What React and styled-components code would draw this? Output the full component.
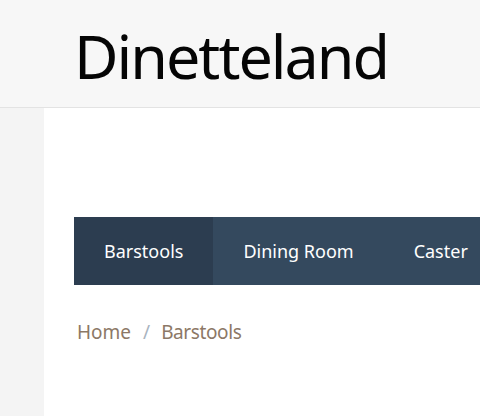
import React from "react";
import styled, { createGlobalStyle } from "styled-components";

const Global = createGlobalStyle`
  html, body { margin: 0; padding: 0; background: #ffffff; }
  body { font-family: "Noto Sans", "DejaVu Sans", sans-serif; }
  * { box-sizing: border-box; }
`;

const Page = styled.div`
  width: 480px;
  height: 416px;
  overflow: hidden;
  display: flex;
  flex-direction: column;
`;

const Header = styled.header`
  height: 108px;
  background: #f7f7f7;
  border-bottom: 1px solid #e3e3e3;
  padding: 0 0 0 74px;
  display: flex;
  align-items: center;
  flex-shrink: 0;
`;

const Logo = styled.h1`
  margin: 0;
  font-family: "Noto Sans", sans-serif;
  font-weight: 400;
  font-size: 61px;
  line-height: 1;
  color: #050505;
  white-space: nowrap;
  letter-spacing: -2px;
  transform: translateY(2px);
`;

const Body = styled.div`
  flex: 1;
  display: flex;
`;

const Side = styled.aside`
  width: 44px;
  background: #f4f4f4;
  flex-shrink: 0;
`;

const Main = styled.main`
  flex: 1;
  background: #ffffff;
  padding: 109px 0 0 30px;
  min-width: 0;
`;

const Nav = styled.nav`
  display: flex;
  height: 68px;
  background: #34495e;
  width: max-content;
  min-width: 500px;
`;

const NavItem = styled.a`
  display: flex;
  align-items: center;
  padding: 0 30px;
  height: 100%;
  color: #ffffff;
  font-size: 18px;
  white-space: nowrap;
  text-decoration: none;
  background: ${(p) => (p.$active ? "#2c3d50" : "transparent")};
`;

const Crumbs = styled.div`
  display: flex;
  align-items: center;
  margin-top: 34px;
  padding-left: 3px;
  font-size: 19px;
  color: #8c7866;
`;

const Sep = styled.span`
  color: #a9b4c0;
  margin: 0 11px 0 12px;
`;

const Crumb = styled.span`
  letter-spacing: ${(p) => (p.$tight ? "-0.4px" : "0")};
`;

export default function App() {
  return (
    <Page>
      <Global />
      <Header>
        <Logo>Dinetteland</Logo>
      </Header>
      <Body>
        <Side />
        <Main>
          <Nav>
            <NavItem $active>Barstools</NavItem>
            <NavItem>Dining Room</NavItem>
            <NavItem>Caster</NavItem>
          </Nav>
          <Crumbs>
            <Crumb>Home</Crumb>
            <Sep>/</Sep>
            <Crumb $tight>Barstools</Crumb>
          </Crumbs>
        </Main>
      </Body>
    </Page>
  );
}
